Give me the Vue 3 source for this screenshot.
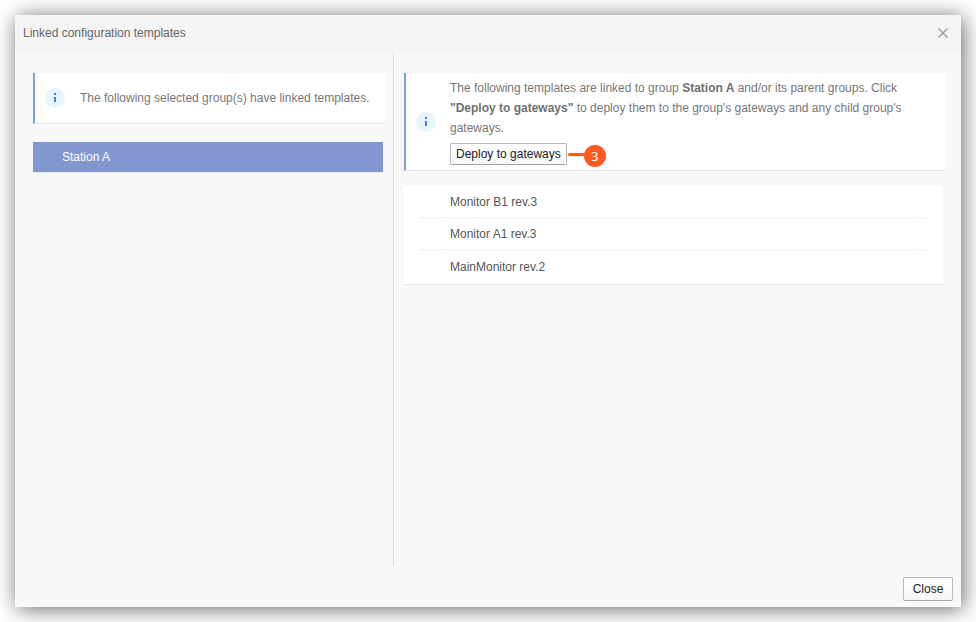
<script setup>
import { ref } from 'vue'

const groups = ['Station A']
const selected = ref('Station A')
const templates = ['Monitor B1 rev.3', 'Monitor A1 rev.3', 'MainMonitor rev.2']
</script>

<template>
  <div class="backdrop">
    <section class="dialog" role="dialog" aria-labelledby="dialog-title">
      <header class="dialog-header">
        <h1 id="dialog-title" class="title">Linked configuration templates</h1>
        <button class="icon-button" type="button" aria-label="Dismiss">
          <svg width="12" height="12" viewBox="0 0 12 12" aria-hidden="true">
            <path d="M1.5 1.5 L10.5 10.5 M10.5 1.5 L1.5 10.5" fill="none" stroke="#999" stroke-width="1.4" />
          </svg>
        </button>
      </header>

      <div class="dialog-body">
        <div class="pane groups-pane">
          <div class="notice notice-short">
            <svg class="info" width="20" height="20" viewBox="0 0 20 20" aria-hidden="true">
              <circle cx="10" cy="10" r="10" fill="#e6f6ff" />
              <path d="M9 5h2v2H9zM9 9h2v5H9z" fill="#4a78dc" />
            </svg>
            <p class="notice-text">The following selected group(s) have linked templates.</p>
          </div>
          <ul class="group-list">
            <li v-for="group in groups" :key="group">
              <button
                type="button"
                class="group"
                :class="{ selected: group === selected }"
                @click="selected = group"
              >{{ group }}</button>
            </li>
          </ul>
        </div>

        <div class="pane templates-pane">
          <div class="notice">
            <svg class="info" width="20" height="20" viewBox="0 0 20 20" aria-hidden="true">
              <circle cx="10" cy="10" r="10" fill="#e6f6ff" />
              <path d="M9 5h2v2H9zM9 9h2v5H9z" fill="#4a78dc" />
            </svg>
            <div class="notice-content">
              <p class="notice-text">
                The following templates are linked to group <b>{{ selected }}</b> and/or its parent groups. Click
                <b>"Deploy to gateways"</b> to deploy them to the group's gateways and any child group's gateways.
              </p>
              <div class="deploy">
                <button class="button deploy-button" type="button">Deploy to gateways</button>
                <span class="step"><span class="step-number">3</span></span>
              </div>
            </div>
          </div>

          <div class="card">
            <table class="templates">
              <tbody>
                <tr v-for="name in templates" :key="name">
                  <td class="lead"></td>
                  <td class="name">{{ name }}</td>
                  <td class="trail"></td>
                </tr>
              </tbody>
            </table>
          </div>
        </div>
      </div>

      <footer class="dialog-footer">
        <button class="button close-button" type="button">Close</button>
      </footer>
    </section>
  </div>
</template>

<style>
body {
  background: #fff;
}
</style>

<style scoped>
.backdrop {
  box-sizing: border-box;
  display: flex;
  height: 100vh;
  padding: 15px;
  overflow: hidden;
  font-family: "Liberation Sans", Arial, sans-serif;
  font-size: 12px;
  line-height: 20px;
  color: #555;
}
.dialog {
  display: flex;
  flex: 1;
  flex-direction: column;
  min-width: 0;
  background: #f8f8f8;
  box-shadow: 2px 2px 20px rgba(0, 0, 0, 0.6);
}
.dialog-header {
  display: flex;
  align-items: center;
  justify-content: space-between;
  height: 38px;
  padding: 0 12px 2px 8px;
  box-sizing: border-box;
  background: #f4f4f4;
}
.title {
  margin: 0;
  font-size: 12px;
  font-weight: normal;
  color: #666;
}
.icon-button {
  display: flex;
  padding: 0;
  border: 0;
  background: none;
  cursor: pointer;
}
.dialog-body {
  display: flex;
  flex: 1;
  min-height: 0;
}
.pane {
  box-sizing: border-box;
  padding-top: 20px;
}
.groups-pane {
  flex: 0 0 378px;
  padding-right: 8px;
  padding-left: 18px;
}
.templates-pane {
  flex: 1;
  min-width: 0;
  padding-right: 16px;
  padding-left: 10px;
  border-left: 1px solid #d8d8d8;
}
.notice {
  display: flex;
  align-items: center;
  gap: 15px;
  padding: 5px 15px 5px 10px;
  border-bottom: 1px solid #e6e6e6;
  border-left: 2px solid #7ba2e4;
  background: #fff;
}
.notice-short {
  box-sizing: border-box;
  min-height: 51px;
}
.info {
  flex: none;
}
.notice-text {
  margin: 0;
  color: #777;
}
.notice-text b {
  color: #707070;
}
.templates-pane .notice {
  gap: 14px;
}
.group-list {
  margin: 18px 2px 0 0;
  padding: 0;
  list-style: none;
}
.group {
  display: block;
  width: 100%;
  height: 31px;
  padding: 0 29px;
  border: 0;
  border-bottom: 1px solid #e6e6e6;
  background: #fff;
  color: #555;
  font: inherit;
  text-align: left;
  cursor: pointer;
}
.group.selected {
  background: #8297d0;
  background-clip: padding-box;
  color: #fff;
}
.deploy {
  display: flex;
  align-items: center;
  padding-top: 5px;
}
.button {
  box-sizing: border-box;
  border: 1px solid #b8b8b8;
  border-bottom-color: #a4a4a4;
  border-radius: 2px;
  background: linear-gradient(#fff, #f6f6f6);
  color: #222;
  font: inherit;
  cursor: pointer;
}
.deploy-button {
  height: 22px;
  padding: 0 5px;
}
.step {
  position: relative;
  width: 38px;
  height: 3px;
  margin-left: 1px;
  border-radius: 2px;
  background: #ff5a1f;
}
.step-number {
  position: absolute;
  top: -8px;
  right: 0;
  width: 22px;
  height: 22px;
  border-radius: 50%;
  background: #ff5a1f;
  color: #fff;
  font-family: "Open Sans", sans-serif;
  font-size: 13px;
  line-height: 22px;
  text-align: center;
}
.card {
  margin: 15px 2px 0 0;
  padding: 0 13px;
  border-bottom: 1px solid #e6e6e6;
  background: #fff;
}
.templates {
  width: 100%;
  border-spacing: 2px 0;
  color: #555;
}
.templates td {
  height: 31px;
  padding: 0 5px;
  border-bottom: 1px solid #eee;
}
.templates tr:last-child td {
  height: 34px;
  border-bottom: 0;
}
.templates .lead {
  width: 14px;
}
.templates .trail {
  width: 0;
}
.dialog-footer {
  display: flex;
  justify-content: flex-end;
  padding: 11px 8px 6px;
}
.close-button {
  width: 50px;
  height: 24px;
  padding: 0;
}
</style>
